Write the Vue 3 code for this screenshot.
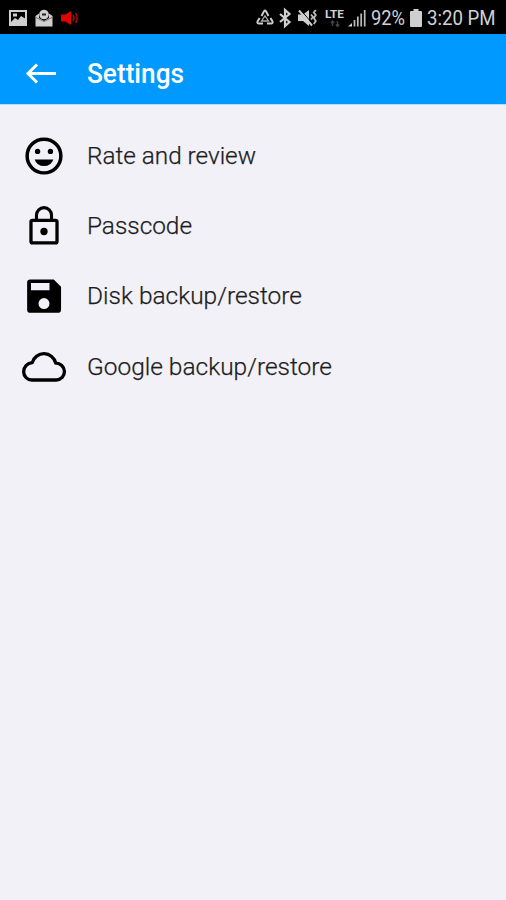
<script setup>
const items = [
  { id: 'rate', label: 'Rate and review', width: 169 },
  { id: 'lock', label: 'Passcode', width: 105 },
  { id: 'disk', label: 'Disk backup/restore', width: 215 },
  { id: 'cloud', label: 'Google backup/restore', width: 245 }
]
</script>

<template>
  <div class="screen">
    <div class="status">
      <div class="notes">
        <svg width="18" height="16" viewBox="0 0 18 16">
          <rect x="1" y="1" width="16" height="14" fill="none" stroke="#cfcfcf" stroke-width="2" />
          <path d="M2 12l4-4 3 2 3-4 5 3v5H2z" fill="#cfcfcf" />
          <path d="M4 3.500h4v3H4z" fill="#cfcfcf" />
        </svg>
        <svg width="18" height="18" viewBox="0 0 18 18">
          <path d="M0.500 7L4 4.500V9l5 3 5-3V4.500L17.500 7v10.500H.5z" fill="#cfcfcf" />
          <circle cx="9" cy="5.500" r="4.800" fill="#cfcfcf" />
          <path d="M7 5.500h4" fill="none" stroke="#222" stroke-width="2" />
          <path d="M1 8.500l8 4 8-4" fill="none" stroke="#777" stroke-width="1" />
        </svg>
        <svg width="18" height="16" viewBox="0 0 18 16">
          <path d="M0 4.500h4.500L10 1v14L4.500 11.500H0z" fill="#e00505" />
          <path d="M12 5q2 3 0 6M14.500 3q3.500 5 0 10" fill="none" stroke="#b50505" stroke-width="1.500" />
        </svg>
      </div>
      <div class="system">
        <svg class="recycle" width="18" height="17" viewBox="0 0 18 17">
          <path d="M5.500 7L8 2.200q1-1.500 2 0L12.500 7M14.500 9l2 3.500q.7 2-1.500 2h-4M7 14.500H3q-2.200 0-1.500-2L3.700 9" fill="none" stroke="#cfcfcf" stroke-width="1.900" />
          <path d="M5.500 12L9 7l3.500 5z" fill="none" stroke="#aaa" stroke-width="1.300" />
        </svg>
        <svg class="bt" width="12" height="18" viewBox="0 0 12 18">
          <path d="M1 5l9.500 8L6 17V1l4.500 4L1 13" fill="none" stroke="#cfcfcf" stroke-width="2.200" />
        </svg>
        <svg class="mute" width="20" height="18" viewBox="0 0 20 18">
          <path d="M0 5.500h5l6-4.500v16l-6-5H0z" fill="#cfcfcf" />
          <path d="M2.800 1l11 13" stroke="#000" stroke-width="1" />
          <path d="M1 1.500l13 15" stroke="#cfcfcf" stroke-width="2" />
          <path d="M13 5.500l2 2.500-2 2.500M17.800 1l-2 2.500 2 2.500-2 3 2 3-2 3" fill="none" stroke="#bdbdbd" stroke-width="1.800" />
        </svg>
        <div class="lte">
          <svg width="19" height="11" viewBox="0 0 19 11"><text x="0" y="9" textLength="19" lengthAdjust="spacingAndGlyphs">LTE</text></svg>
          <svg width="10" height="6" viewBox="0 0 10 6">
            <path d="M2.500 0v5M.8 2L2.500 0l1.700 2M7.500 0v5M5.800 3.500L7.500 5.500l1.700-2" fill="none" stroke="#444" stroke-width="1.400" />
          </svg>
        </div>
        <svg class="signal" width="18" height="18" viewBox="0 0 18 18">
          <path d="M0 17.500L4 14v3.500z" fill="#cfcfcf" />
          <path d="M6.500 11v6.500M9.800 7.500v10M13.200 4.500v13M16.700 1v16.500" stroke="#bcbcbc" stroke-width="1.700" />
        </svg>
        <svg class="pct" width="36" height="28"><text x="1" y="21" textLength="34" lengthAdjust="spacingAndGlyphs">92%</text></svg>
        <svg class="battery" width="12" height="18" viewBox="0 0 12 18">
          <path d="M3.500 0h5v2H11q1 0 1 1v14q0 1-1 1H1q-1 0-1-1V3q0-1 1-1h2.500z" fill="#cfcfcf" />
        </svg>
        <svg class="time" width="72" height="28"><text x="1" y="21" textLength="68.500" lengthAdjust="spacingAndGlyphs">3:20 PM</text></svg>
      </div>
    </div>

    <header class="bar">
      <svg class="back" width="32" height="22" viewBox="0 0 32 22">
        <path d="M31 10.500H3M12 1.500l-9 9 9 9" fill="none" stroke="#fff" stroke-width="3" />
      </svg>
      <svg class="title" width="110" height="40"><text x="0" y="28.500" textLength="97" lengthAdjust="spacingAndGlyphs">Settings</text></svg>
    </header>

    <main class="list">
      <div v-for="item in items" :key="item.id" class="row">
        <svg class="icon" viewBox="0 0 24 24">
          <g v-if="item.id === 'rate'">
            <circle cx="12" cy="12" r="9.200" fill="none" stroke="#000" stroke-width="1.900" />
            <circle cx="8.500" cy="9.500" r="1.450" />
            <circle cx="15.500" cy="9.500" r="1.450" />
            <path d="M6.900 13.900h10.200q-1.200 3.600-5.100 3.600T6.900 13.900z" />
          </g>
          <g v-else-if="item.id === 'lock'">
            <path d="M7.900 8.500V6.100a4.100 4.100 0 0 1 8.200 0v2.400" fill="none" stroke="#000" stroke-width="1.700" />
            <rect x="4.900" y="8.900" width="14.200" height="12.300" rx=".8" fill="none" stroke="#000" stroke-width="1.800" />
            <circle cx="12" cy="15" r="2" />
          </g>
          <path
            v-else-if="item.id === 'disk'"
            fill-rule="evenodd"
            d="M17.300 3H4.400C3.500 3 2.800 3.600 2.800 4.500v15.100c0 .9.700 1.600 1.600 1.600h15.300c.9 0 1.600-.7 1.600-1.600V7zM12 19.100a3 3 0 1 1 0-6 3 3 0 0 1 0 6zM15 8.800H4.900V4.900H15z"
          />
          <path
            v-else
            d="M5.400 19.100H18.700A4.600 4.600 0 0 0 18.400 9.900A6.600 6.600 0 0 0 5.600 9.600C2.800 9.900.9 12 .9 14.600A4.500 4.500 0 0 0 5.400 19.100z"
            fill="none"
            stroke="#000"
            stroke-width="1.800"
            stroke-linejoin="round"
          />
        </svg>
        <svg class="label" width="300" height="40"><text x="0" y="28" :textLength="item.width" lengthAdjust="spacingAndGlyphs">{{ item.label }}</text></svg>
      </div>
    </main>
  </div>
</template>

<style>
body { margin: 0; background: #f2f1f7; }
</style>

<style scoped>
.screen { width: 506px; height: 900px; background: #f2f1f7; font-family: Roboto, sans-serif; overflow: hidden; }
svg { display: block; flex: none; overflow: visible; }
.status { height: 34px; background: #000; display: flex; justify-content: space-between; align-items: center; padding: 1px 8px 0 9px; box-sizing: border-box; }
.notes { display: flex; align-items: center; gap: 8px; }
.system { display: flex; align-items: center; }
.bt { margin-left: 5px; }
.mute { margin-left: 7px; }
.lte { width: 19px; height: 18px; margin-left: 7px; display: flex; flex-direction: column; align-items: center; gap: 1px; }
.signal { margin-left: 4px; }
.pct { margin-left: 4px; }
.battery { margin-left: 4px; }
.time { margin-left: 4px; }
.system text { fill: #d2d2d2; font-size: 20.500px; }
.system .lte text { font-size: 11px; font-weight: 700; }
.bar { height: 70px; box-sizing: border-box; background: #0099ff; display: flex; align-items: center; padding: 9px 0 0 25px; }
.title { margin-left: 29.500px; }
.title text { fill: #fff; font-size: 27px; font-weight: 500; }
.list { padding-top: 15.500px; border-top: 1px solid #b9defb; }
.row { height: 70.300px; display: flex; align-items: center; padding-left: 22px; }
.icon { width: 44px; height: 44px; }
.label { margin-left: 21.300px; }
.label text { fill: #1c1c1e; stroke: #1c1c1e; stroke-width: 0.250px; font-size: 24px; font-weight: 300; }
</style>
